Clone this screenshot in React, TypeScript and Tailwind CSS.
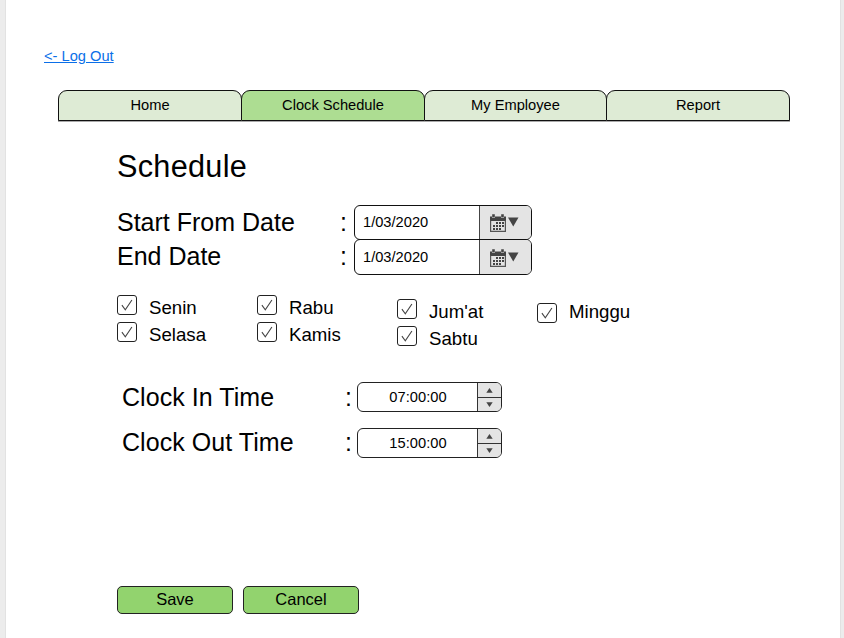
import React from "react";

const tabs = ["Home", "Clock Schedule", "My Employee", "Report"];

function CalendarIcon() {
  return (
    <svg width="16" height="18" viewBox="0 0 16 18" fill="#444">
      <path d="M0 2.6h2v1.2h3V2.6h6v1.2h3V2.6h2V7H0z" />
      <path d="M2.2 0.3h2.6v3H2.2zM11.2 0.3h2.6v3h-2.6z" />
      <path d="M0.6 6.5v10.9h14.8v-10.9" fill="none" stroke="#555" strokeWidth="1.2" />
      <path d="M6 8h2v2H6zM9 8h2v2H9zM12 8h2v2h-2zM3 11h2v2H3zM6 11h2v2H6zM9 11h2v2H9zM12 11h2v2h-2zM3 14h2v2H3zM6 14h2v2H6zM9 14h2v2H9z" />
    </svg>
  );
}

function DateField({ className }: { className: string }) {
  return (
    <div className={`flex w-[178px] overflow-hidden rounded-[6px] border border-[#111] bg-white ${className}`}>
      <div className="w-[124px] pl-[8px] text-[14.67px] leading-[33px]">1/03/2020</div>
      <div className="-mt-px flex flex-1 items-start border-l border-[#444] bg-[#e4e4e4] pt-[9px] pl-[10px]">
        <CalendarIcon />
        <svg className="mt-[3px] ml-[2px]" width="11" height="10" viewBox="0 0 11 10" fill="#444">
          <path d="M0 0.5h10.5L5.25 9.5z" />
        </svg>
      </div>
    </div>
  );
}

function TimeField({ value }: { value: string }) {
  return (
    <div className="flex h-[30px] w-[145px] overflow-hidden rounded-[6px] border border-[#222] bg-white">
      <div className="w-[119px] pl-px text-center text-[14.67px] leading-[28px]">{value}</div>
      <div className="flex flex-1 flex-col border-l border-[#333] bg-[#e4e4e4]">
        <div className="flex h-[15px] items-center justify-center border-b border-[#333]">
          <svg width="7" height="5" viewBox="0 0 7 5" fill="#444"><path d="M0.3 4.7h6.4L3.5 0z" /></svg>
        </div>
        <div className="flex flex-1 items-center justify-center">
          <svg width="7" height="5" viewBox="0 0 7 5" fill="#444"><path d="M0.3 0.3h6.4L3.5 5z" /></svg>
        </div>
      </div>
    </div>
  );
}

function Day({ label, raised = false }: { label: string; raised?: boolean }) {
  return (
    <div className="flex h-[27px] items-start">
      <div className="h-[20px] w-[20px] rounded-[3px] border border-[#222] bg-white">
        <svg width="18" height="18" viewBox="0 0 18 18" fill="none" stroke="#444" strokeWidth="1.1">
          <path d="M3.9 9.2L7.3 13.8L13.9 4" />
        </svg>
      </div>
      <div className={`ml-[12px] text-[18.67px] leading-[21px] ${raised ? "-mt-[2px]" : "pt-[2px]"}`}>{label}</div>
    </div>
  );
}

export default function App() {
  return (
    <div className="h-[638px] w-[844px] overflow-hidden bg-[#ececec] pr-[3px] pl-[5px] font-['Liberation_Sans',Arial,sans-serif] text-black">
      <main className="h-full border-x border-[#e2e2e2] bg-white pt-[46px]">
        <a className="ml-[38px] block w-max text-[14.67px] leading-[20px] text-[#0b6fe8] underline" href="#">{"<- Log Out"}</a>
        <nav className="mt-[24px] ml-[52px] flex">
          {tabs.map((tab, i) => (
            <div
              key={tab}
              className={`h-[31px] rounded-t-[9px] border border-[#111] text-center text-[14.67px] leading-[28px] shadow-[0_1px_0_#aaa] ${i === 0 ? "" : "-ml-px"} ${i === 2 ? "w-[183px]" : "w-[184px]"} ${i === 1 ? "bg-[#addd92]" : "bg-[#deebd5]"}`}
            >
              {tab}
            </div>
          ))}
        </nav>
        <h1 className="mt-[27px] ml-[111px] text-[30.67px] leading-[36px] tracking-[0.28px]">Schedule</h1>
        <section className="mt-[21px] ml-[111px] flex text-[25px] leading-[34px]">
          <div className="w-[223px]">
            <div>Start From Date</div>
            <div>End Date</div>
          </div>
          <div className="w-[14px]">
            <div>:</div>
            <div>:</div>
          </div>
          <div>
            <DateField className="h-[35px]" />
            <DateField className="-mt-px h-[36px] pt-px" />
          </div>
        </section>
        <section className="mt-[20px] ml-[111px] flex">
          <div className="w-[140px]"><Day label="Senin" /><Day label="Selasa" /></div>
          <div className="w-[140px]"><Day label="Rabu" /><Day label="Kamis" /></div>
          <div className="w-[140px] pt-[4px]"><Day label="Jum'at" /><Day label="Sabtu" /></div>
          <div className="pt-[8px]"><Day label="Minggu" raised /></div>
        </section>
        <section className="mt-[29px] ml-[116px] flex flex-col gap-[16px] text-[25px] tracking-[0.06px]">
          <div className="flex h-[30px] leading-[30px]">
            <div className="w-[223px]">Clock In Time</div>
            <div className="w-[12px]">:</div>
            <TimeField value="07:00:00" />
          </div>
          <div className="flex h-[30px] leading-[29px]">
            <div className="w-[223px]">Clock Out Time</div>
            <div className="w-[12px]">:</div>
            <TimeField value="15:00:00" />
          </div>
        </section>
        <div className="mt-[128px] ml-[111px] flex gap-[10px] text-[16.5px]">
          <button className="h-[28px] w-[116px] rounded-[5px] border border-[#222] bg-[#92d36e] pb-[2px] leading-[24px]">Save</button>
          <button className="h-[28px] w-[116px] rounded-[5px] border border-[#222] bg-[#92d36e] pb-[2px] leading-[24px]">Cancel</button>
        </div>
      </main>
    </div>
  );
}
